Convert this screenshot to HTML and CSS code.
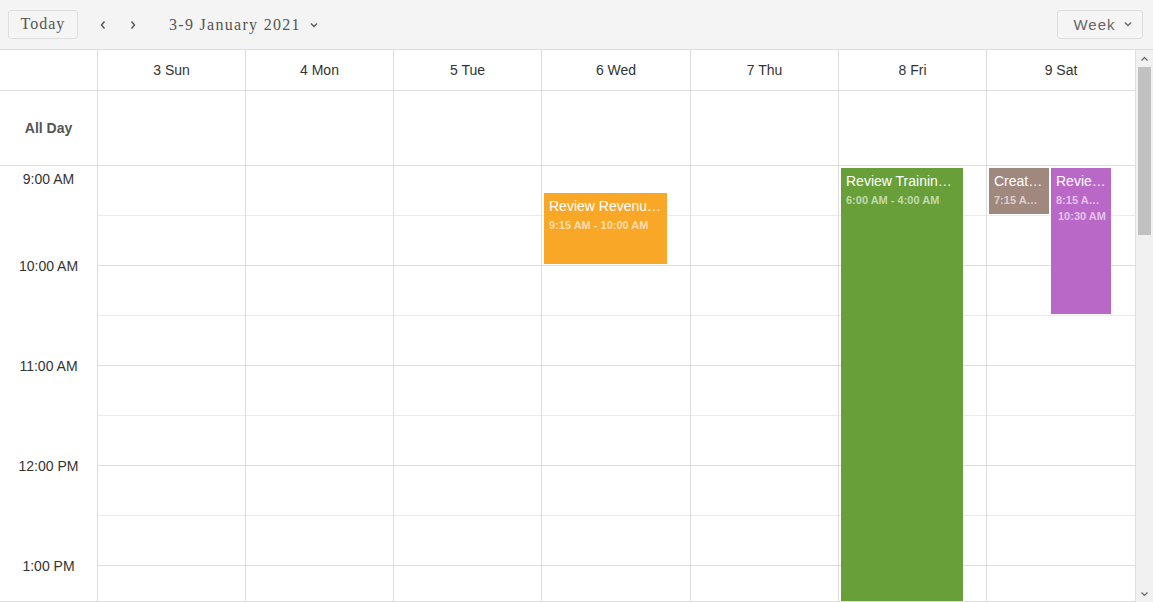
FILE: index.html
```html
<!DOCTYPE html>
<html>
<head>
<meta charset="utf-8">
<link rel="stylesheet" href="styles.css">
</head>
<body>
<div class="scheduler">
  <div class="toolbar">
    <div class="tb-left">
      <button class="btn today">Today</button>
      <span class="nav"><svg width="8" height="10" viewBox="0 0 8 10"><polyline points="5.5,1.5 2.5,5 5.5,8.5" fill="none" stroke="#555" stroke-width="1.4"/></svg></span>
      <span class="nav"><svg width="8" height="10" viewBox="0 0 8 10"><polyline points="2.5,1.5 5.5,5 2.5,8.5" fill="none" stroke="#555" stroke-width="1.4"/></svg></span>
      <span class="title">3-9 January 2021</span>
      <svg class="caret" width="10" height="8" viewBox="0 0 10 8"><polyline points="2,2.5 5,5.5 8,2.5" fill="none" stroke="#555" stroke-width="1.3"/></svg>
    </div>
    <button class="btn week">Week <svg width="10" height="8" viewBox="0 0 10 8"><polyline points="2,2.5 5,5.5 8,2.5" fill="none" stroke="#666" stroke-width="1.3"/></svg></button>
  </div>
  <div class="main">
    <div class="grid">
      <div class="head-row">
        <div class="corner"></div>
        <div class="dh">3 Sun</div>
        <div class="dh">4 Mon</div>
        <div class="dh">5 Tue</div>
        <div class="dh w149">6 Wed</div>
        <div class="dh">7 Thu</div>
        <div class="dh">8 Fri</div>
        <div class="dh w149">9 Sat</div>
      </div>
      <div class="allday-row">
        <div class="corner allday-label">All Day</div>
        <div class="dc"></div>
        <div class="dc"></div>
        <div class="dc"></div>
        <div class="dc w149"></div>
        <div class="dc"></div>
        <div class="dc"></div>
        <div class="dc w149"></div>
      </div>
      <div class="body-row">
        <div class="times">
          <div class="tl first">9:00 AM</div>
          <div class="tl second">10:00 AM</div>
          <div class="tl">11:00 AM</div>
          <div class="tl">12:00 PM</div>
          <div class="tl">1:00 PM</div>
        </div>
        <div class="day"><div class="s"></div><div class="s"></div><div class="s"></div><div class="s"></div><div class="s"></div><div class="s"></div><div class="s"></div><div class="s"></div><div class="s"></div></div>
        <div class="day"><div class="s"></div><div class="s"></div><div class="s"></div><div class="s"></div><div class="s"></div><div class="s"></div><div class="s"></div><div class="s"></div><div class="s"></div></div>
        <div class="day"><div class="s"></div><div class="s"></div><div class="s"></div><div class="s"></div><div class="s"></div><div class="s"></div><div class="s"></div><div class="s"></div><div class="s"></div></div>
        <div class="day w149">
          <div class="s"></div><div class="s"></div><div class="s"></div><div class="s"></div><div class="s"></div><div class="s"></div><div class="s"></div><div class="s"></div><div class="s"></div>
          <div class="ev orange ev-rev">
            <div class="ev-title">Review Revenue Report</div>
            <div class="ev-time">9:15 AM - 10:00 AM</div>
          </div>
        </div>
        <div class="day"><div class="s"></div><div class="s"></div><div class="s"></div><div class="s"></div><div class="s"></div><div class="s"></div><div class="s"></div><div class="s"></div><div class="s"></div></div>
        <div class="day">
          <div class="s"></div><div class="s"></div><div class="s"></div><div class="s"></div><div class="s"></div><div class="s"></div><div class="s"></div><div class="s"></div><div class="s"></div>
          <div class="ev green ev-train">
            <div class="ev-title">Review Training Material</div>
            <div class="ev-time">6:00 AM - 4:00 AM</div>
          </div>
        </div>
        <div class="day w149 last">
          <div class="s"></div><div class="s"></div><div class="s"></div><div class="s"></div><div class="s"></div><div class="s"></div><div class="s"></div><div class="s"></div><div class="s"></div>
          <div class="ev brown ev-create">
            <div class="ev-title">Create New Proposal</div>
            <div class="ev-time">7:15 AM - 9:30 AM</div>
          </div>
          <div class="ev purple ev-review">
            <div class="ev-title">Review Plans</div>
            <div class="ev-time narrow">8:15 AM -</div>
            <div class="ev-time second-line">10:30 AM</div>
          </div>
        </div>
      </div>
    </div>
    <div class="scrollbar">
      <div class="sb-arrow"><svg width="9" height="6" viewBox="0 0 9 6"><polyline points="1.5,4.5 4.5,1.5 7.5,4.5" fill="none" stroke="#666" stroke-width="1.2"/></svg></div>
      <div class="sb-track"><div class="sb-thumb"></div></div>
      <div class="sb-arrow"><svg width="9" height="6" viewBox="0 0 9 6"><polyline points="1.5,1.5 4.5,4.5 7.5,1.5" fill="none" stroke="#666" stroke-width="1.2"/></svg></div>
    </div>
  </div>
</div>
</body>
</html>
```

FILE: styles.css
```css
* { box-sizing: border-box; }
html, body { margin: 0; padding: 0; background: #fff; }
body { font-family: "Liberation Sans", Arial, sans-serif; color: #333; overflow: hidden; }

.scheduler { width: 1153px; height: 602px; display: flex; flex-direction: column; }

.toolbar {
  height: 50px;
  background: #f4f4f4;
  border-bottom: 1px solid #dcdcdc;
  display: flex;
  align-items: center;
  justify-content: space-between;
  padding: 0 10px 0 8px;
  flex: none;
}
.tb-left { display: flex; align-items: center; }
.btn {
  height: 29px;
  border: 1px solid #dedede;
  background: #f5f5f5;
  border-radius: 3px;
  color: #555;
  padding: 0;
  display: flex;
  align-items: center;
  justify-content: center;
  cursor: pointer;
}
.today {
  width: 70px;
  font-family: "Liberation Serif", "Times New Roman", serif;
  font-size: 16px;
  letter-spacing: 1px;
  margin-top: -1px;
}
.nav { width: 30px; display: flex; justify-content: center; align-items: center; }
.tb-left .nav:first-of-type { margin-left: 10px; }
.title {
  margin-left: 21px;
  font-family: "Liberation Serif", "Times New Roman", serif;
  font-size: 16px;
  letter-spacing: 1.3px;
  color: #555;
}
.caret { margin-left: 8px; }
.week {
  width: 86px;
  font-size: 15px;
  letter-spacing: 1px;
  color: #666;
  gap: 7px;
  padding-left: 6px;
  margin-top: -1px;
}

.main { flex: 1; display: flex; min-height: 0; }
.grid { width: 1136px; display: flex; flex-direction: column; overflow: hidden; border-bottom: 1px solid #dedede; }

.head-row, .allday-row, .body-row { display: flex; flex: none; }
.head-row { height: 41px; border-bottom: 1px solid #dedede; }
.allday-row { height: 75px; border-bottom: 1px solid #dedede; }
.body-row { flex: 1; min-height: 0; overflow: hidden; }

.corner { width: 97px; flex: none; }
.dh, .dc, .day { width: 148px; flex: none; border-left: 1px solid #dedede; }
.w149 { width: 149px; }
.day.last, .dh:last-child, .dc:last-child { border-right: 1px solid #dedede; width: 150px; }

.dh { display: flex; align-items: center; justify-content: center; font-size: 14px; color: #333; padding-bottom: 1px; }
.allday-label { display: flex; align-items: center; justify-content: center; font-weight: bold; font-size: 14px; color: #555; padding-bottom: 1px; }

.times { width: 97px; flex: none; display: flex; flex-direction: column; align-items: center; }
.tl { font-size: 14px; line-height: 16px; height: 16px; color: #333; margin-top: 84px; }
.tl.first { margin-top: 5px; }
.tl.second { margin-top: 71px; }

.day { position: relative; }
.s { height: 50px; border-bottom: 1px solid #ececec; }
.s:nth-child(even) { border-bottom-color: #dedede; }

.ev {
  position: absolute;
  color: #fff;
  padding: 5px 5px 0 5px;
  overflow: hidden;
}
.ev-title { font-size: 14px; line-height: 17px; white-space: nowrap; overflow: hidden; text-overflow: ellipsis; }
.ev-time { font-size: 11px; font-weight: bold; line-height: 14px; margin-top: 3px; white-space: nowrap; overflow: hidden; text-overflow: ellipsis; color: rgba(255,255,255,0.62); }
.ev-time.narrow { width: 45px; }
.ev-time.second-line { margin-top: 2px; padding-left: 2px; }

.orange { background: #f9a727; }
.green { background: #689f38; }
.brown { background: #a1887f; }
.purple { background: #ba68c8; }

.ev-rev { left: 2px; top: 27px; width: 123px; height: 71px; }
.ev-train { left: 2px; top: 2px; width: 122px; height: 440px; }
.ev-create { left: 2px; top: 2px; width: 60px; height: 46px; }
.ev-review { left: 64px; top: 2px; width: 60px; height: 146px; }

.scrollbar { width: 17px; flex: none; background: #f1f1f1; display: flex; flex-direction: column; }
.sb-arrow { height: 17px; display: flex; align-items: center; justify-content: center; flex: none; }
.sb-track { flex: 1; padding: 0 2px; }
.sb-thumb { height: 168px; background: #c1c1c1; }
```
